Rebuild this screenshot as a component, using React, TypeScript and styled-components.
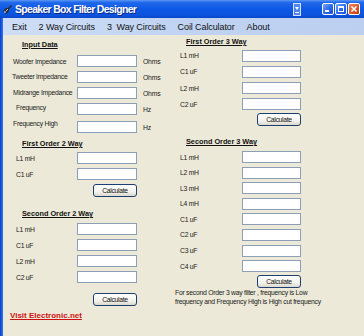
import React from 'react';
import styled, { createGlobalStyle } from 'styled-components';

const Global = createGlobalStyle`
  html, body { margin: 0; padding: 0; background: #ece9d8; }
  body { width: 364px; height: 336px; overflow: hidden; font-family: "Liberation Sans", Arial, sans-serif; }
`;

const Window = styled.div`
  width: 364px;
  height: 336px;
  display: flex;
  flex-direction: column;
  background: #ece9d8;
  overflow: hidden;
`;

const TitleBar = styled.div`
  height: 18px;
  flex: none;
  display: flex;
  align-items: center;
  padding: 0 4px 0 2px;
  background: linear-gradient(180deg, #5a97f7 0%, #2168ea 14%, #0d59e5 50%, #0a53dd 85%, #0846c6 100%);
`;

const AppIcon = styled.svg`
  width: 11px;
  height: 11px;
  flex: none;
`;

const TitleText = styled.span`
  margin-left: 2px;
  color: #ffffff;
  font-weight: bold;
  font-size: 10.5px;
  letter-spacing: -0.7px;
  text-shadow: 1px 1px 0 #0b2a8a;
  white-space: nowrap;
  flex: 1;
`;

const DropGlyph = styled.svg`
  width: 8px;
  height: 13px;
  flex: none;
  margin-right: 21px;
`;

const CapButtons = styled.div`
  display: flex;
  gap: 1px;
`;

const CapButton = styled.div<{ $close?: boolean }>`
  width: 12px;
  height: 12px;
  box-sizing: border-box;
  border: 1px solid #ffffff;
  border-radius: 2px;
  display: flex;
  align-items: center;
  justify-content: center;
  background: ${(p) =>
    p.$close
      ? 'linear-gradient(135deg, #f08a62 0%, #de5a2c 50%, #c23c12 100%)'
      : 'linear-gradient(135deg, #7aa6fa 0%, #2f6cf0 50%, #1a4fd6 100%)'};
`;

const Frame = styled.div`
  flex: 1;
  display: flex;
  min-height: 0;
`;

const Edge = styled.div`
  width: 3px;
  flex: none;
  background: linear-gradient(90deg, #0a3fc4 0%, #1d5ee8 60%, #3a78f0 100%);
`;

const Main = styled.div`
  flex: 1;
  display: flex;
  flex-direction: column;
`;

const MenuBar = styled.div`
  height: 17px;
  flex: none;
  display: flex;
  align-items: center;
  padding-left: 3px;
  background: linear-gradient(90deg, #cfdef6 0%, #c0d3f2 50%, #bccff0 100%);
`;

const MenuItem = styled.span`
  padding: 0 6px;
  font-size: 9px;
  letter-spacing: -0.1px;
  color: #111;
  white-space: pre;
`;

const Content = styled.div`
  flex: 1;
  display: flex;
`;

const Column = styled.div<{ $w?: number; $pl?: number }>`
  ${(p) => (p.$w ? `width: ${p.$w}px; flex: none;` : 'flex: 1;')}
  padding-left: ${(p) => p.$pl ?? 0}px;
  display: flex;
  flex-direction: column;
`;

const Heading = styled.div<{ $mt: number; $pl: number }>`
  margin-top: ${(p) => p.$mt}px;
  padding-left: ${(p) => p.$pl}px;
  height: 10px;
  line-height: 10px;
  font-size: 7.3px;
  font-weight: bold;
  text-decoration: underline;
  color: #111;
  white-space: nowrap;
`;

const Field = styled.div<{ $mt: number; $lw: number; $iw: number }>`
  margin-top: ${(p) => p.$mt}px;
  height: 12px;
  display: grid;
  grid-template-columns: ${(p) => p.$lw}px ${(p) => p.$iw}px auto;
  column-gap: 6px;
  align-items: center;
`;

const Label = styled.span<{ $pl: number; $up?: number }>`
  padding-left: ${(p) => p.$pl}px;
  margin-bottom: ${(p) => (p.$up ?? 0) * 2}px;
  font-size: 6.8px;
  letter-spacing: -0.25px;
  color: #1a1a1a;
  white-space: nowrap;
  line-height: 9px;
`;

const Unit = styled.span`
  font-size: 6.8px;
  letter-spacing: -0.2px;
  color: #1a1a1a;
  line-height: 9px;
`;

const Input = styled.div`
  height: 12px;
  box-sizing: border-box;
  background: #ffffff;
  border: 1px solid #8d9fb6;
`;

const ButtonRow = styled.div<{ $mt: number; $lw: number; $iw: number }>`
  margin-top: ${(p) => p.$mt}px;
  display: grid;
  grid-template-columns: ${(p) => p.$lw}px ${(p) => p.$iw}px;
  column-gap: 6px;
`;

const Button = styled.div`
  grid-column: 2;
  justify-self: end;
  width: 44px;
  height: 13px;
  box-sizing: border-box;
  border: 1px solid #1c3f72;
  border-radius: 3px;
  background: linear-gradient(180deg, #ffffff 0%, #f4f3ee 60%, #dcd8cc 100%);
  display: flex;
  align-items: center;
  justify-content: center;
  font-size: 6.8px;
  letter-spacing: -0.3px;
  color: #111;
`;

const LinkText = styled.div`
  margin-top: 5px;
  padding-left: 7px;
  height: 10px;
  line-height: 10px;
  font-size: 8px;
  font-weight: bold;
  color: #cc1111;
  text-decoration: underline;
  white-space: nowrap;
`;

const Note = styled.div`
  padding-left: 1px;
  font-size: 6.8px;
  letter-spacing: -0.25px;
  line-height: 9px;
  color: #1a1a1a;
  white-space: nowrap;
`;

type Row = { label: string; unit?: string; pl: number; up?: number };

const L = { lw: 68, iw: 60 };
const R = { lw: 62, iw: 59 };

function Rows({ rows, first, gap, lw, iw }: { rows: Row[]; first: number; gap: number; lw: number; iw: number }) {
  return (
    <>
      {rows.map((r, i) => (
        <Field key={r.label} $mt={i === 0 ? first : gap} $lw={lw} $iw={iw}>
          <Label $pl={r.pl} $up={r.up}>{r.label}</Label>
          <Input />
          {r.unit ? <Unit>{r.unit}</Unit> : <span />}
        </Field>
      ))}
    </>
  );
}

export default function App() {
  return (
    <Window>
      <Global />
      <TitleBar>
        <AppIcon viewBox="0 0 11 11">
          <path d="M1 7 L4 4 L6 4 L9 1 L10 2 L7 5 L7 7 L4 10 Z" fill="#2a2a2a" />
          <path d="M4 7 L6 5" stroke="#d8d8d8" strokeWidth="1" />
          <circle cx="3" cy="8" r="1" fill="#9bb7e8" />
        </AppIcon>
        <TitleText>Speaker Box Filter Designer</TitleText>
        <DropGlyph viewBox="0 0 8 13">
          <rect x="0.5" y="0.5" width="7" height="12" fill="#4f86ef" stroke="#d6e3ff" />
          <path d="M2 4 L6 4 L4 7 Z" fill="#ffffff" />
          <rect x="2" y="9" width="4" height="1" fill="#ffffff" />
        </DropGlyph>
        <CapButtons>
          <CapButton>
            <svg width="8" height="8" viewBox="0 0 8 8">
              <rect x="1" y="5" width="4" height="2" fill="#fff" />
            </svg>
          </CapButton>
          <CapButton>
            <svg width="8" height="8" viewBox="0 0 8 8">
              <rect x="1.5" y="1.5" width="5" height="5" fill="none" stroke="#fff" />
              <rect x="1" y="1" width="6" height="2" fill="#fff" />
            </svg>
          </CapButton>
          <CapButton $close>
            <svg width="8" height="8" viewBox="0 0 8 8">
              <path d="M1.5 1.5 L6.5 6.5 M6.5 1.5 L1.5 6.5" stroke="#fff" strokeWidth="1.6" />
            </svg>
          </CapButton>
        </CapButtons>
      </TitleBar>
      <Frame>
        <Edge />
        <Main>
          <MenuBar>
            <MenuItem>Exit</MenuItem>
            <MenuItem>2 Way Circuits</MenuItem>
            <MenuItem>3  Way Circuits</MenuItem>
            <MenuItem>Coil Calculator</MenuItem>
            <MenuItem>About</MenuItem>
          </MenuBar>
          <Content>
            <Column $w={171}>
              <Heading $mt={5} $pl={19}>Input Data</Heading>
              <Rows
                first={5}
                gap={4}
                {...L}
                rows={[
                  { label: 'Woofer Impedance', unit: 'Ohms', pl: 10 },
                  { label: 'Tweeter Impedance', unit: 'Ohms', pl: 9, up: 1 },
                  { label: 'Midrange Impedance', unit: 'Ohms', pl: 10, up: 0.7 },
                  { label: 'Frequency', unit: 'Hz', pl: 13, up: 1.3 },
                  { label: 'Frequency High', unit: 'Hz', pl: 10, up: 3.5 },
                ]}
              />
              <Heading $mt={8} $pl={19}>First Order 2 Way</Heading>
              <Rows
                first={3}
                gap={4}
                {...L}
                rows={[
                  { label: 'L1 mH', pl: 13 },
                  { label: 'C1 uF', pl: 13 },
                ]}
              />
              <ButtonRow $mt={4} $lw={L.lw} $iw={L.iw}>
                <Button>Calculate</Button>
              </ButtonRow>
              <Heading $mt={12} $pl={19}>Second Order 2 Way</Heading>
              <Rows
                first={4}
                gap={4}
                {...L}
                rows={[
                  { label: 'L1 mH', pl: 13 },
                  { label: 'C1 uF', pl: 13 },
                  { label: 'L2 mH', pl: 13 },
                  { label: 'C2 uF', pl: 13 },
                ]}
              />
              <ButtonRow $mt={10} $lw={L.lw} $iw={L.iw}>
                <Button>Calculate</Button>
              </ButtonRow>
              <LinkText>Visit Electronic.net</LinkText>
            </Column>
            <Column>
              <Heading $mt={2} $pl={12}>First Order 3 Way</Heading>
              <Rows
                first={3}
                gap={4}
                {...R}
                rows={[
                  { label: 'L1 mH', pl: 6, up: 0.5 },
                  { label: 'C1 uF', pl: 6, up: 0.8 },
                  { label: 'L2 mH', pl: 6 },
                  { label: 'C2 uF', pl: 6 },
                ]}
              />
              <ButtonRow $mt={3} $lw={R.lw} $iw={R.iw}>
                <Button>Calculate</Button>
              </ButtonRow>
              <Heading $mt={11} $pl={12}>Second Order 3 Way</Heading>
              <Rows
                first={4}
                gap={3.6}
                {...R}
                rows={[
                  { label: 'L1 mH', pl: 6 },
                  { label: 'L2 mH', pl: 6 },
                  { label: 'L3 mH', pl: 6 },
                  { label: 'L4 mH', pl: 6 },
                  { label: 'C1 uF', pl: 6 },
                  { label: 'C2 uF', pl: 6 },
                  { label: 'C3 uF', pl: 6 },
                  { label: 'C4 uF', pl: 6 },
                ]}
              />
              <ButtonRow $mt={3} $lw={R.lw} $iw={R.iw}>
                <Button>Calculate</Button>
              </ButtonRow>
              <Note>
                For second Order 3 way filter , frequency is Low
                <br />
                frequency and Frequency High is High cut frequency
              </Note>
            </Column>
          </Content>
        </Main>
      </Frame>
    </Window>
  );
}
